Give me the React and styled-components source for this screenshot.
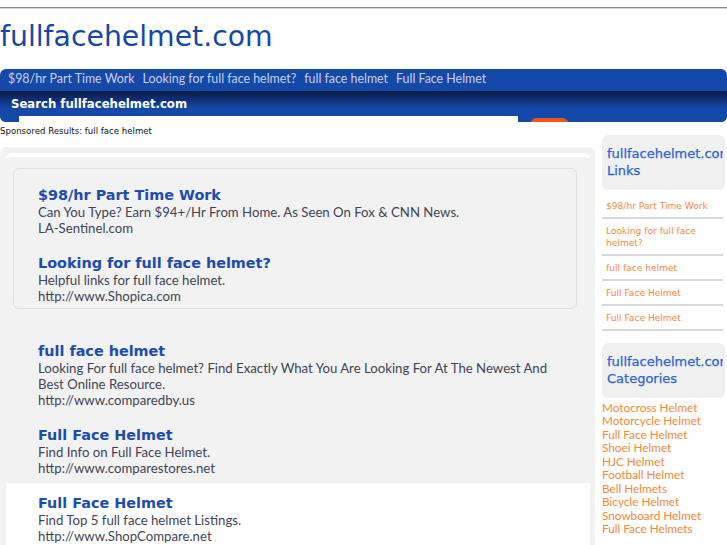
import React from 'react';
import styled, { createGlobalStyle } from 'styled-components';

const Global = createGlobalStyle`
  html, body { margin: 0; padding: 0; background: #fff; }
  body { font-family: "DejaVu Sans", sans-serif; }
  a { text-decoration: none; color: inherit; }
  ul { margin: 0; padding: 0; list-style: none; }
`;

const Page = styled.div`
  width: 727px;
  padding-top: 7px;
  overflow: hidden;
`;

const TopRule = styled.div`
  height: 0;
  border-top: 1px solid #8c8c8c;
  border-bottom: 1px solid #d2d2d2;
`;

const SiteTitle = styled.h1`
  margin: 11px 0 15px;
  font: 400 28.3px/34px "DejaVu Sans", sans-serif;
  color: #1747a6;
`;

const SearchPanel = styled.div`
  height: 53px;
  border-radius: 6px;
  overflow: hidden;
  background: #1448a9;
`;

const NavRow = styled.nav`
  box-sizing: border-box;
  height: 22px;
  display: flex;
  align-items: flex-start;
  gap: 8px;
  padding: 1px 0 0 8px;
  font: 400 12.4px/18px Lato, sans-serif;
  color: #c9d1ea;
`;

const SearchRow = styled.div`
  height: 31px;
  background: linear-gradient(to bottom, #0a1c44 0%, #10307a 30%, #1448a9 55%, #1448a9 100%);
`;

const SearchLabel = styled.div`
  box-sizing: border-box;
  height: 25px;
  padding: 4px 0 0 11px;
  font: 700 11.7px/18px "DejaVu Sans", sans-serif;
  color: #fff;
`;

const SearchForm = styled.form`
  display: flex;
  align-items: flex-start;
  margin: 0;
  padding-left: 19px;
`;

const SearchInput = styled.input`
  width: 499px;
  height: 20px;
  border: 0;
  padding: 0;
  background: #fff;
  outline: none;
`;

const SearchButton = styled.button`
  margin: 2px 0 0 12px;
  width: 39px;
  height: 18px;
  border: 0;
  border-radius: 7px;
  background: #f0561a;
  color: #fff;
  font: 700 6px/10px "DejaVu Sans", sans-serif;
  padding: 0;
`;

const Columns = styled.div`
  display: flex;
  align-items: flex-start;
  gap: 7px;
`;

const MainCol = styled.main`
  width: 595px;
  flex: none;
`;

const Sponsored = styled.div`
  padding-top: 3px;
  margin-bottom: 10px;
  font: 400 8.6px/12px "DejaVu Sans", sans-serif;
  color: #111;
`;

const Panel = styled.div`
  background: #f2f2f2;
  border-radius: 6px;
  padding: 6px 5px 2px 6px;
`;

const Inner = styled.div`
  border-top: 4px solid #fff;
  border-radius: 6px 6px 0 0;
`;

const AdBox = styled.div`
  margin: 11px 13px 0 7px;
  border: 1px solid #dedede;
  border-radius: 6px;
  padding: 17.5px 0 4px 24px;
`;

const Ad = styled.div`
  & + & { margin-top: 19.5px; }
`;

const AdTitle = styled.a`
  display: block;
  font: 700 14.4px/17px "DejaVu Sans", sans-serif;
  color: #1c4cb0;
`;

const AdText = styled.div`
  font: 400 13.2px/16px Lato, sans-serif;
  color: #3f4456;
`;

const ResultList = styled.div`
  margin-top: 21.5px;
`;

const ResultItem = styled.div`
  padding: 12px 0 7px 32px;
  background: ${p => (p.$highlight ? '#fff' : 'transparent')};
`;

const SideCol = styled.aside`
  width: 123px;
  flex: none;
  margin-top: 13px;
`;

const SideHead = styled.div`
  box-sizing: border-box;
  height: 55px;
  margin-top: ${p => p.$gap || 0}px;
  padding: 11px 0 12px 5px;
  background: #f0f0f0;
  border-radius: 6px;
  font: 400 13px/16.5px "DejaVu Sans", sans-serif;
  color: #2d63d3;
  -webkit-text-stroke: 0.25px #2d63d3;
`;

const SideHeadLine = styled.div`
  margin-right: 2px;
  overflow: hidden;
  white-space: nowrap;
`;

const LinkList = styled.ul`
  margin: 4px 2px 0 0 !important;
`;

const LinkItem = styled.li`
  padding: 6px 0 5px 4px;
  border-bottom: 2px solid #d9d9d9;
  font: 400 9.1px/12px "DejaVu Sans", sans-serif;
  color: #f28a3c;
`;

const CatList = styled.ul`
  margin-top: 3px !important;
`;

const CatItem = styled.li`
  font: 400 11.75px/13.45px Lato, sans-serif;
  color: #f08a3a;
  white-space: nowrap;
`;

const navLinks = ['$98/hr Part Time Work', 'Looking for full face helmet?', 'full face helmet', 'Full Face Helmet'];

const boxAds = [
  { title: '$98/hr Part Time Work', lines: ['Can You Type? Earn $94+/Hr From Home. As Seen On Fox & CNN News.', 'LA-Sentinel.com'] },
  { title: 'Looking for full face helmet?', lines: ['Helpful links for full face helmet.', 'http://www.Shopica.com'] },
];

const results = [
  { title: 'full face helmet', lines: ['Looking For full face helmet? Find Exactly What You Are Looking For At The Newest And', 'Best Online Resource.', 'http://www.comparedby.us'] },
  { title: 'Full Face Helmet', lines: ['Find Info on Full Face Helmet.', 'http://www.comparestores.net'] },
  { title: 'Full Face Helmet', lines: ['Find Top 5 full face helmet Listings.', 'http://www.ShopCompare.net'], highlight: true },
];

const sideLinks = ['$98/hr Part Time Work', 'Looking for full face helmet?', 'full face helmet', 'Full Face Helmet', 'Full Face Helmet'];

const categories = ['Motocross Helmet', 'Motorcycle Helmet', 'Full Face Helmet', 'Shoei Helmet', 'HJC Helmet', 'Football Helmet', 'Bell Helmets', 'Bicycle Helmet', 'Snowboard Helmet', 'Full Face Helmets'];

export default function App() {
  return (
    <Page>
      <Global />
      <TopRule />
      <SiteTitle>fullfacehelmet.com</SiteTitle>
      <SearchPanel>
        <NavRow>
          {navLinks.map((l, i) => <a key={i} href="#">{l}</a>)}
        </NavRow>
        <SearchRow>
          <SearchLabel>Search fullfacehelmet.com</SearchLabel>
          <SearchForm onSubmit={e => e.preventDefault()}>
            <SearchInput type="text" />
            <SearchButton type="submit">SEARCH</SearchButton>
          </SearchForm>
        </SearchRow>
      </SearchPanel>
      <Columns>
        <MainCol>
          <Sponsored>Sponsored Results: full face helmet</Sponsored>
          <Panel>
            <Inner>
              <AdBox>
                {boxAds.map((ad, i) => (
                  <Ad key={i}>
                    <AdTitle href="#">{ad.title}</AdTitle>
                    {ad.lines.map((t, j) => <AdText key={j}>{t}</AdText>)}
                  </Ad>
                ))}
              </AdBox>
              <ResultList>
                {results.map((ad, i) => (
                  <ResultItem key={i} $highlight={ad.highlight}>
                    <AdTitle href="#">{ad.title}</AdTitle>
                    {ad.lines.map((t, j) => <AdText key={j}>{t}</AdText>)}
                  </ResultItem>
                ))}
              </ResultList>
            </Inner>
          </Panel>
        </MainCol>
        <SideCol>
          <SideHead>
            <SideHeadLine>fullfacehelmet.com</SideHeadLine>
            <SideHeadLine>Links</SideHeadLine>
          </SideHead>
          <LinkList>
            {sideLinks.map((l, i) => <LinkItem key={i}><a href="#">{l}</a></LinkItem>)}
          </LinkList>
          <SideHead $gap={12}>
            <SideHeadLine>fullfacehelmet.com</SideHeadLine>
            <SideHeadLine>Categories</SideHeadLine>
          </SideHead>
          <CatList>
            {categories.map((c, i) => <CatItem key={i}><a href="#">{c}</a></CatItem>)}
          </CatList>
        </SideCol>
      </Columns>
    </Page>
  );
}
